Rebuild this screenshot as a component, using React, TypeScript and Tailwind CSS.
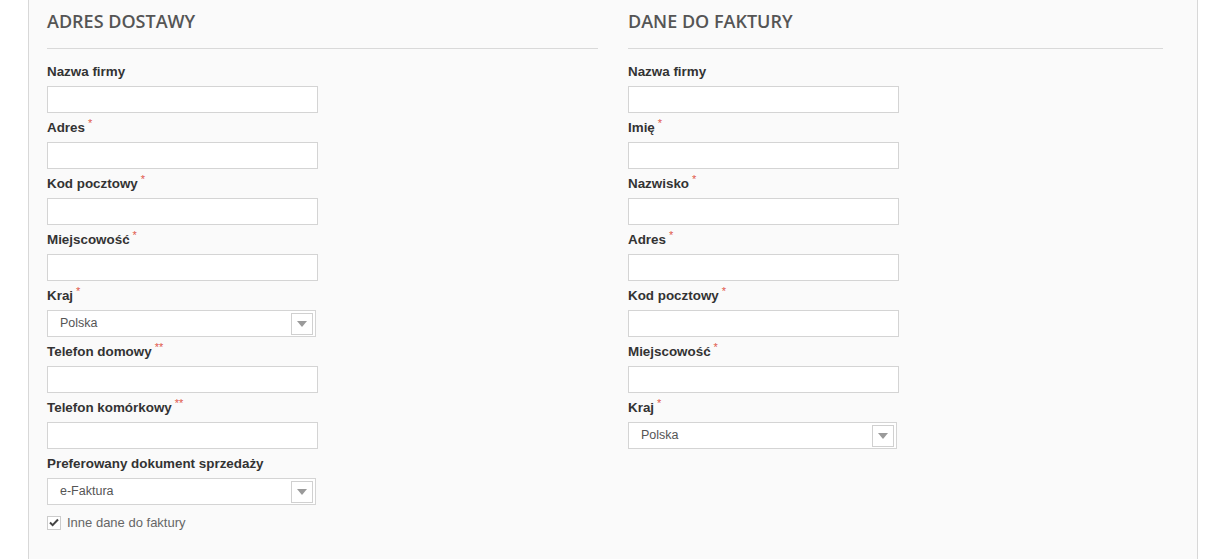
import React from 'react';

type Field = { label: string; req?: 0 | 1 | 2; select?: string };

const shipping: Field[] = [
  { label: 'Nazwa firmy' },
  { label: 'Adres', req: 1 },
  { label: 'Kod pocztowy', req: 1 },
  { label: 'Miejscowość', req: 1 },
  { label: 'Kraj', req: 1, select: 'Polska' },
  { label: 'Telefon domowy', req: 2 },
  { label: 'Telefon komórkowy', req: 2 },
  { label: 'Preferowany dokument sprzedaży', select: 'e-Faktura' },
];

const invoice: Field[] = [
  { label: 'Nazwa firmy' },
  { label: 'Imię', req: 1 },
  { label: 'Nazwisko', req: 1 },
  { label: 'Adres', req: 1 },
  { label: 'Kod pocztowy', req: 1 },
  { label: 'Miejscowość', req: 1 },
  { label: 'Kraj', req: 1, select: 'Polska' },
];

function Select({ value }: { value: string }) {
  return (
    <div className="flex h-[27px] w-[269px] items-center justify-between border border-[#d4d4d4] bg-white pl-[12px] pr-[2px]">
      <span className="text-[12.5px] text-[#555]">{value}</span>
      <span className="flex h-[22px] w-[22px] items-center justify-center border border-[#d0d0d0] bg-white">
        <svg width="10" height="6" viewBox="0 0 10 6">
          <path d="M0 0h10L5 6z" fill="#9a9a9a" />
        </svg>
      </span>
    </div>
  );
}

function Row({ f }: { f: Field }) {
  return (
    <div className="mb-[5px]">
      <div className="flex h-[18px] items-center pt-[2px] text-[13.4px] font-bold text-[#333]">
        {f.label}
        {f.req ? (
          <span className="relative -top-[5px] ml-[3px] text-[11px] font-normal text-[#e0584a]">
            {f.req === 2 ? '**' : '*'}
          </span>
        ) : null}
      </div>
      <div className="mt-[6px]">
        {f.select ? (
          <Select value={f.select} />
        ) : (
          <div className="h-[27px] w-[271px] border border-[#d4d4d4] bg-white" />
        )}
      </div>
    </div>
  );
}

function Column({ title, fields, line, children }: { title: string; fields: Field[]; line: string; children?: React.ReactNode }) {
  return (
    <section>
      <h2
        className={`${line} border-b border-[#d9d9d9] pt-[9px] pb-[15px] text-[18px] leading-[24px] font-semibold uppercase text-[#555]`}
        style={{ fontFamily: '"Open Sans", sans-serif' }}
      >
        {title}
      </h2>
      <div className="mt-[13px]">
        {fields.map((f) => (
          <Row key={f.label} f={f} />
        ))}
        {children}
      </div>
    </section>
  );
}

export default function App() {
  return (
    <div className="min-h-[559px] bg-white pl-[28px]" style={{ fontFamily: '"Liberation Sans", Arial, sans-serif' }}>
      <div className="min-h-[559px] w-[1170px] border-x border-[#d8d8d8] bg-[#fafafa] pl-[18px]">
        <div className="grid grid-cols-[551px_535px] gap-x-[30px]">
          <Column title="Adres dostawy" fields={shipping} line="w-[551px]">
            <label className="mt-[8px] flex items-center gap-[6px] text-[13px] text-[#666]">
              <span className="flex h-[14px] w-[14px] items-center justify-center border border-[#ccc] bg-white">
                <svg width="10" height="9" viewBox="0 0 10 9">
                  <path d="M1 4.5l2.6 2.6L9 1.5" stroke="#444" strokeWidth="2" fill="none" />
                </svg>
              </span>
              Inne dane do faktury
            </label>
          </Column>
          <Column title="Dane do faktury" fields={invoice} line="w-[535px]" />
        </div>
      </div>
    </div>
  );
}
